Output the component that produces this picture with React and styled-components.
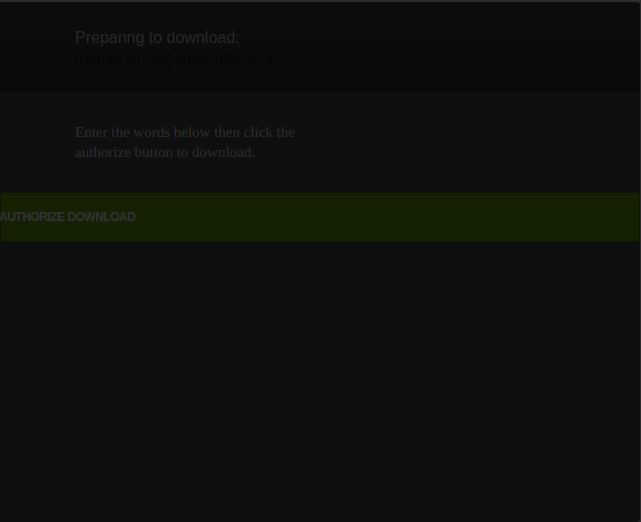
import React from 'react';
import styled, { createGlobalStyle } from 'styled-components';

const GlobalStyle = createGlobalStyle`
  html, body {
    margin: 0;
    padding: 0;
    background: #2c2c2c;
  }
  body {
    height: 522px;
    overflow: hidden;
  }
`;

const Modal = styled.div`
  margin-top: 2px;
  width: 640px;
  height: 520px;
  background: #0f0f0f;
  border-radius: 0 4px 4px 0;
  overflow: hidden;
`;

const Header = styled.div`
  height: 90px;
  box-sizing: border-box;
  padding: 25px 0 0 75px;
  background: linear-gradient(#0c0c0c, #0a0a0a);
  font-family: 'Liberation Sans', Arial, sans-serif;
  font-size: 16px;
  line-height: 22px;
`;

const Line = styled.div`
  color: ${(props) => (props.dim ? '#060606' : '#282828')};
`;

const Intro = styled.p`
  margin: 0;
  padding: 30px 0 0 75px;
  width: 240px;
  font-family: 'Liberation Serif', 'Times New Roman', serif;
  font-size: 15px;
  line-height: 20px;
  color: #2e2e2e;
`;

const Button = styled.button`
  display: block;
  width: 640px;
  height: 50px;
  margin-top: 30px;
  padding: 0;
  text-indent: -2px;
  text-align: left;
  background: #152103;
  border: 1px solid #0e1802;
  border-radius: 3px;
  color: #333333;
  font-family: 'Liberation Sans', Arial, sans-serif;
  font-size: 12px;
  font-weight: bold;
  letter-spacing: -0.5px;
  cursor: pointer;
`;

const App = () => {
  return (
    <>
      <GlobalStyle />
      <Modal>
        <Header>
          <Line>Preparing to download:</Line>
          <Line dim>Infintie Arctic(video-effects.ir)</Line>
        </Header>
        <Intro>
          Enter the words below then click the authorize button to download.
        </Intro>
        <Button>AUTHORIZE DOWNLOAD</Button>
      </Modal>
    </>
  );
};

export default App;
